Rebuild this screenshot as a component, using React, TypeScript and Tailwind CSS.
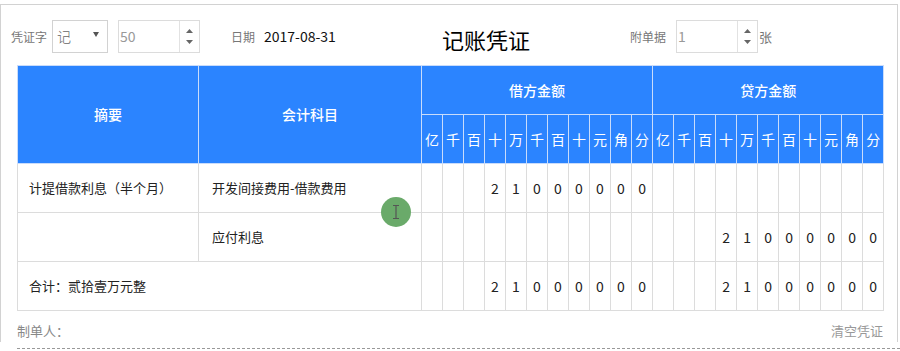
import React from "react";

const units = ["亿", "千", "百", "十", "万", "千", "百", "十", "元", "角", "分"];

const rows = [
  { summary: "计提借款利息（半个月）", subject: "开发间接费用-借款费用", debit: "21000000", credit: "" },
  { summary: "", subject: "应付利息", debit: "", credit: "21000000" },
];

// pad an amount string into 11 digit slots (right aligned)
function slots(v: string) {
  const arr: string[] = Array(11).fill("");
  if (!v) return arr;
  const chars = v.split("");
  for (let i = 0; i < chars.length; i++) arr[11 - chars.length + i] = chars[i];
  return arr;
}

function Spinner() {
  return (
    <div className="flex flex-col items-center justify-center gap-[7px] w-[20px] h-full border-l border-[#e2e2e2]">
      <svg width="7" height="4" viewBox="0 0 7 4"><path d="M3.5 0 L7 4 L0 4 Z" fill="#666" /></svg>
      <svg width="7" height="4" viewBox="0 0 7 4"><path d="M0 0 L7 0 L3.5 4 Z" fill="#666" /></svg>
    </div>
  );
}

function NumberBox({ value }: { value: string }) {
  return (
    <div className="flex items-center h-[33px] w-[82px] border border-[#dcdcdc] bg-white">
      <span className="flex-1 pl-[1px] text-[14px] text-[#999]">{value}</span>
      <Spinner />
    </div>
  );
}

function DigitCells({ value }: { value: string }) {
  return (
    <>
      {slots(value).map((d, i) => (
        <td key={i} className="border border-[#dcdcdc] text-center text-[14px] text-[#222] p-0">
          {d}
        </td>
      ))}
    </>
  );
}

export default function App() {
  return (
    <div
      className="relative w-[900px] h-[351px] bg-white pt-[4px] overflow-hidden"
      style={{ fontFamily: '"Noto Sans CJK SC", "Noto Sans", sans-serif' }}
    >
      <div className="w-[898px] h-[338px] border border-b-0 border-[#d2d2d2]">
        {/* top bar */}
        <div className="flex items-center h-[33px] mt-[15px] pl-[10px]">
          <span className="w-[36px] text-[12px] text-[#777]">凭证字</span>
          <div className="ml-[5px] flex items-center justify-between w-[56px] h-[33px] border border-[#d2d2d2] px-[4px]">
            <span className="text-[14px] text-[#666] font-light">记</span>
            <svg width="6" height="5" viewBox="0 0 6 5" className="mr-[4px] mb-[4px]"><path d="M0 0 L6 0 L3 5 Z" fill="#555" /></svg>
          </div>
          <div className="ml-[10px]"><NumberBox value="50" /></div>
          <span className="ml-[31px] w-[24px] text-[12px] text-[#777]">日期</span>
          <span className="ml-[9px] w-[80px] text-[14px] text-[#111]">2017-08-31</span>
          <span className="ml-[98px] w-[90px] text-[22px] leading-none text-black mt-[4px]">记账凭证</span>
          <span className="ml-[98px] w-[36px] text-[12px] text-[#777]">附单据</span>
          <div className="ml-[10px]"><NumberBox value="1" /></div>
          <span className="ml-[1px] text-[13px] text-[#777]">张</span>
        </div>

        {/* voucher table */}
        <table className="ml-[16px] mt-[12px] w-[866px] table-fixed border-collapse">
          <colgroup>
            <col className="w-[181px]" />
            <col className="w-[223px]" />
            {Array.from({ length: 22 }).map((_, i) => (
              <col key={i} className="w-[21px]" />
            ))}
          </colgroup>
          <thead>
            <tr className="h-[49px] bg-[#2b84ff] text-white text-[14px]">
              <th rowSpan={2} className="border border-[#c9dcfb] font-medium">摘要</th>
              <th rowSpan={2} className="border border-[#c9dcfb] font-medium">会计科目</th>
              <th colSpan={11} className="border border-[#c9dcfb] font-medium">借方金额</th>
              <th colSpan={11} className="border border-[#c9dcfb] font-medium">贷方金额</th>
            </tr>
            <tr className="h-[49px] bg-[#2b84ff] text-white text-[14px]">
              {[...units, ...units].map((u, i) => (
                <th key={i} className="border border-[#c9dcfb] font-normal p-0">{u}</th>
              ))}
            </tr>
          </thead>
          <tbody>
            {rows.map((r, i) => (
              <tr key={i} className="h-[49px]">
                <td className="border border-[#dcdcdc] pl-[11px] text-[13px] text-[#222]">{r.summary}</td>
                <td className="border border-[#dcdcdc] pl-[13px] text-[13px] text-[#222]">{r.subject}</td>
                <DigitCells value={r.debit} />
                <DigitCells value={r.credit} />
              </tr>
            ))}
            <tr className="h-[49px]">
              <td colSpan={2} className="border border-[#dcdcdc] pl-[11px] text-[13px] text-[#222]">合计：贰拾壹万元整</td>
              <DigitCells value="21000000" />
              <DigitCells value="21000000" />
            </tr>
          </tbody>
        </table>

        {/* footer */}
        <div className="ml-[16px] w-[866px] h-[40px] flex items-center justify-between text-[13px]">
          <span className="text-[#888]">制单人：</span>
          <span className="text-[#999]">清空凭证</span>
        </div>
      </div>
      <div className="ml-[17px] mt-[6px] border-t border-dashed border-[#999]"></div>

      {/* recording cursor highlight */}
      <div className="absolute left-[381px] top-[197px] w-[30px] h-[30px] rounded-full bg-[#6aaa6a] flex items-center justify-center">
        <svg width="8" height="14" viewBox="0 0 8 14">
          <path d="M1 0.5 H7 M4 0.5 V13.5 M1 13.5 H7" stroke="#555" strokeWidth="1.2" fill="none" />
        </svg>
      </div>
    </div>
  );
}
